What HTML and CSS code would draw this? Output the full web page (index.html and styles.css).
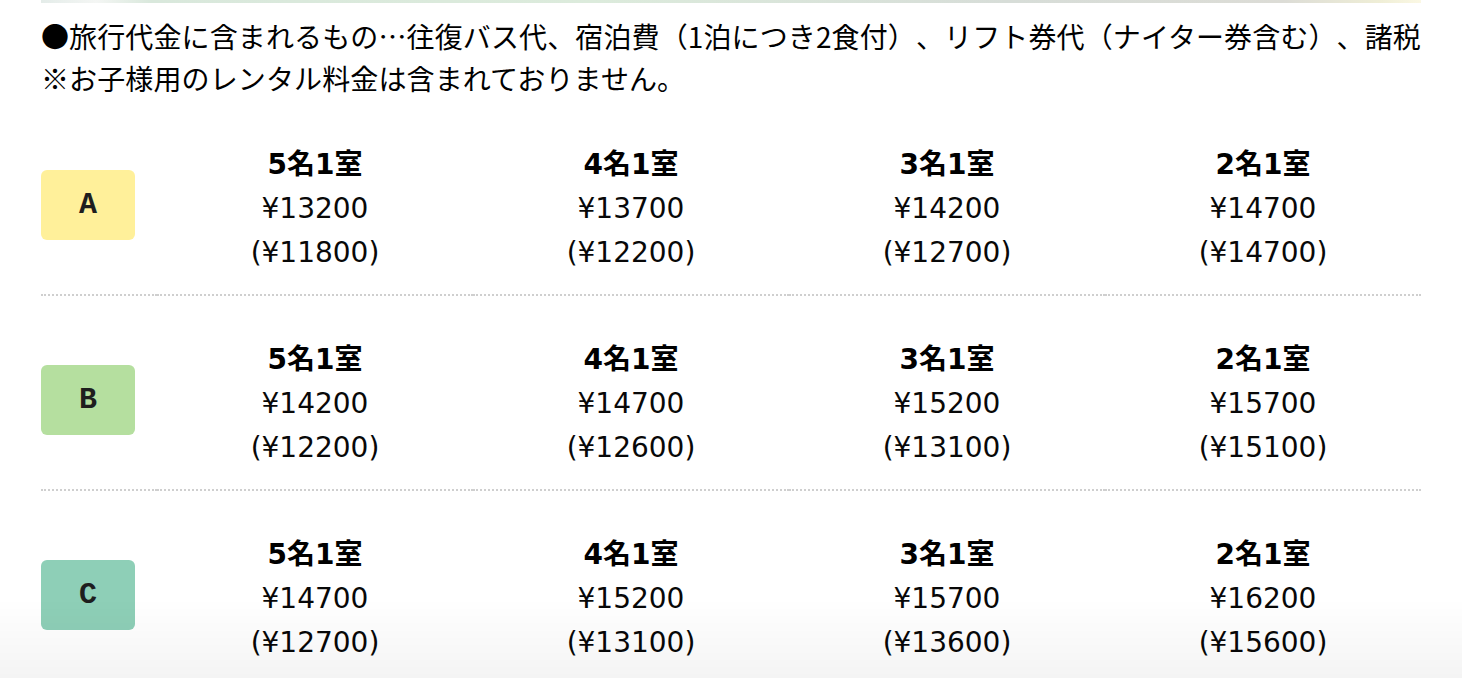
FILE: index.html
```html
<!DOCTYPE html>
<html lang="ja">
<head>
<meta charset="utf-8">
<title>料金表</title>
<link rel="stylesheet" href="styles.css">
</head>
<body>
<div class="page">
  <div class="strip"></div>
  <p class="note">●旅行代金に含まれるもの…往復バス代、宿泊費（1泊につき2食付）、リフト券代（ナイター券含む）、諸税<br>※お子様用のレンタル料金は含まれておりません。</p>
  <table class="price">
    <colgroup><col class="c-label"><col><col><col><col></colgroup>
    <tbody>
      <tr>
        <td class="label"><span class="tag tag-a">A</span></td>
        <td><b>5名1室</b><br>¥13200<br>(¥11800)</td>
        <td><b>4名1室</b><br>¥13700<br>(¥12200)</td>
        <td><b>3名1室</b><br>¥14200<br>(¥12700)</td>
        <td><b>2名1室</b><br>¥14700<br>(¥14700)</td>
      </tr>
      <tr>
        <td class="label"><span class="tag tag-b">B</span></td>
        <td><b>5名1室</b><br>¥14200<br>(¥12200)</td>
        <td><b>4名1室</b><br>¥14700<br>(¥12600)</td>
        <td><b>3名1室</b><br>¥15200<br>(¥13100)</td>
        <td><b>2名1室</b><br>¥15700<br>(¥15100)</td>
      </tr>
      <tr>
        <td class="label"><span class="tag tag-c">C</span></td>
        <td><b>5名1室</b><br>¥14700<br>(¥12700)</td>
        <td><b>4名1室</b><br>¥15200<br>(¥13100)</td>
        <td><b>3名1室</b><br>¥15700<br>(¥13600)</td>
        <td><b>2名1室</b><br>¥16200<br>(¥15600)</td>
      </tr>
    </tbody>
  </table>
</div>
<div class="fade"></div>
</body>
</html>
```

FILE: styles.css
```css
html, body {
  margin: 0;
  padding: 0;
  background: #fff;
}
body {
  font-family: "Noto Sans CJK JP", "Noto Sans", sans-serif;
  color: #000;
  overflow: hidden;
}
.page {
  width: 1380px;
  margin: 0 auto;
}
.strip {
  height: 3px;
  background: linear-gradient(90deg, #e4ece9 0%, #f4f6f4 4%, #d9e8dc 8%, #dcebdc 40%, #d7ddd8 70%, #dcdcd6 90%, #efeed6 97%, #fbf8e4 100%);
}
.note {
  margin: 12px 0 0;
  font-size: 28px;
  line-height: 42px;
  letter-spacing: 0.12px;
  white-space: nowrap;
  text-spacing-trim: space-all;
}
.price {
  width: 1380px;
  table-layout: fixed;
  border-collapse: separate;
  border-spacing: 0;
  margin-top: 2px;
}
.c-label {
  width: 116px;
}
.price td {
  padding: 42px 0 19px;
  text-align: center;
  vertical-align: middle;
  font-family: "DejaVu Sans", "Noto Sans CJK JP", sans-serif;
  font-size: 28px;
  line-height: 44px;
  color: #080808;
  border-bottom: 2px dotted #cfcfcf;
}
.price tr:last-child td {
  border-bottom: none;
}
.price td b {
  font-weight: 700;
  color: #000;
}
.price td.label {
  text-align: left;
  padding-top: 42px;
  padding-bottom: 27px;
}
.tag {
  display: flex;
  align-items: center;
  justify-content: center;
  width: 94px;
  height: 70px;
  border-radius: 6px;
  font-family: "Liberation Mono", "Courier New", monospace;
  font-weight: 700;
  font-size: 30px;
  line-height: 1;
  color: #1e1e1e;
}
.tag-a { background: #fff09a; }
.tag-b { background: #b5df9f; }
.tag-c { background: #8ecfb7; }
.fade {
  position: fixed;
  left: 0;
  right: 0;
  bottom: 0;
  height: 80px;
  background: linear-gradient(180deg, rgba(0,0,0,0) 0%, rgba(0,0,0,0.045) 100%);
  pointer-events: none;
}
```
